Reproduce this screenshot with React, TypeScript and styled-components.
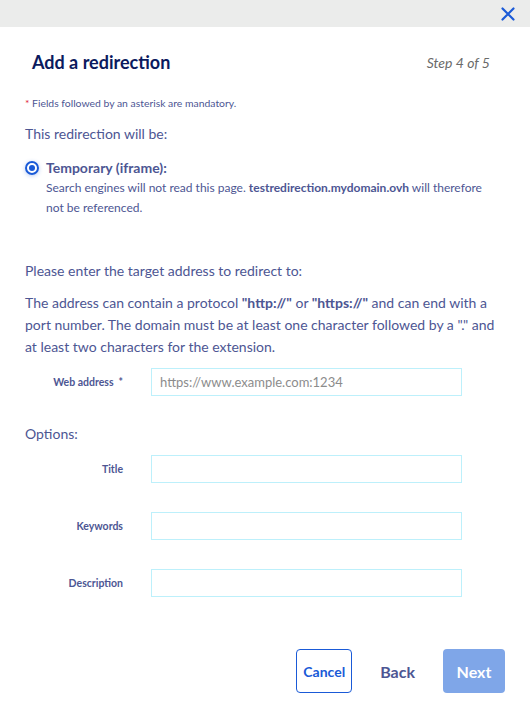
import React from 'react';
import styled, { createGlobalStyle } from 'styled-components';

const GlobalStyle = createGlobalStyle`
  html, body {
    margin: 0;
    padding: 0;
    background: #fff;
  }
  body {
    font-family: 'Lato', 'Open Sans', sans-serif;
    color: #4d5693;
  }
`;

interface FieldProps {
  label: string;
  required?: boolean;
  placeholder?: string;
}

const Field: React.FC<FieldProps> = ({ label, required, placeholder }) => (
  <FieldRow>
    <FieldLabel>
      {label}
      {required && <LabelStar>*</LabelStar>}
    </FieldLabel>
    <TextInput placeholder={placeholder} />
  </FieldRow>
);

const App: React.FC = () => (
  <>
    <GlobalStyle />
    <Modal>
      <TopBar>
        <CloseButton aria-label="close">
          <svg width="14" height="14" viewBox="0 0 14 14">
            <path d="M1.5 1.5 L12.5 12.5 M12.5 1.5 L1.5 12.5" stroke="#1a5ad7" strokeWidth="2.2" strokeLinecap="round" />
          </svg>
        </CloseButton>
      </TopBar>
      <Header>
        <Title>Add a redirection</Title>
        <Step>Step 4 of 5</Step>
      </Header>
      <Body>
        <Mandatory>
          <Red>*</Red> Fields followed by an asterisk are mandatory.
        </Mandatory>
        <Intro>This redirection will be:</Intro>
        <RadioRow>
          <Radio />
          <RadioContent>
            <RadioTitle>Temporary (iframe):</RadioTitle>
            <RadioDesc>
              Search engines will not read this page. <b>testredirection.mydomain.ovh</b> will therefore not be
              referenced.
            </RadioDesc>
          </RadioContent>
        </RadioRow>
        <Section>
          <Text>Please enter the target address to redirect to:</Text>
          <Paragraph>
            The address can contain a protocol <b>"http://"</b> or <b>"https://"</b> and can end with a port number. The
            domain must be at least one character followed by a "." and at least two characters for the extension.
          </Paragraph>
          <Field label="Web address" required placeholder="https://www.example.com:1234" />
        </Section>
        <Options>
          <Text>Options:</Text>
          <Fields>
            <Field label="Title" />
            <Field label="Keywords" />
            <Field label="Description" />
          </Fields>
        </Options>
      </Body>
      <Footer>
        <CancelButton>Cancel</CancelButton>
        <BackButton>Back</BackButton>
        <NextButton disabled>Next</NextButton>
      </Footer>
    </Modal>
  </>
);

export default App;

const Modal = styled.div`
  width: 530px;
  height: 713px;
  background: #fff;
  display: flex;
  flex-direction: column;
`;

const TopBar = styled.div`
  height: 27px;
  background: #ebeceb;
  display: flex;
  justify-content: flex-end;
  align-items: center;
  padding-right: 15px;
`;

const CloseButton = styled.button`
  border: none;
  background: none;
  padding: 0;
  display: flex;
  cursor: pointer;
`;

const Header = styled.div`
  display: flex;
  justify-content: space-between;
  align-items: center;
  padding: 23px 40px 0 32px;
  height: 24px;
`;

const Title = styled.h1`
  margin: 0;
  font-size: 18px;
  font-weight: 700;
  color: #0b1a5e;
`;

const Step = styled.span`
  font-size: 14px;
  font-style: italic;
  color: #6a6a6a;
`;

const Body = styled.div`
  padding: 0 25px;
  display: flex;
  flex-direction: column;
`;

const Mandatory = styled.p`
  margin: 23px 0 0;
  font-size: 10.4px;
`;

const Red = styled.span`
  color: #e1283c;
`;

const Text = styled.p`
  margin: 12px 0 0;
  font-size: 14px;
  line-height: 22px;
`;

const Intro = styled(Text)`
  margin-top: 14px;
`;

const RadioRow = styled.div`
  display: flex;
  gap: 7px;
  margin-top: 13px;
`;

const Radio = styled.span`
  width: 14px;
  height: 14px;
  box-sizing: border-box;
  border-radius: 50%;
  border: 2px solid #1a5ad7;
  margin-top: 3px;
  flex-shrink: 0;
  box-shadow: 0 1px 4px rgba(26, 90, 215, 0.3);
  display: flex;
  align-items: center;
  justify-content: center;

  &::after {
    content: '';
    width: 6px;
    height: 6px;
    border-radius: 50%;
    background: #1a5ad7;
  }
`;

const RadioContent = styled.div`
  display: flex;
  flex-direction: column;
  max-width: 450px;
`;

const RadioTitle = styled.span`
  font-size: 14px;
  font-weight: 700;
  line-height: 20px;
`;

const RadioDesc = styled.p`
  margin: 0;
  font-size: 12px;
  line-height: 20px;
`;

const Section = styled.div`
  margin-top: 30px;
  display: flex;
  flex-direction: column;
`;

const Paragraph = styled.p`
  margin: 10px 0 0;
  font-size: 14px;
  line-height: 22px;
`;

const Options = styled.div`
  margin-top: 15px;
  display: flex;
  flex-direction: column;
`;

const Fields = styled.div`
  display: flex;
  flex-direction: column;
  gap: 19px;
  margin-top: 0;
`;

const FieldRow = styled.div`
  display: grid;
  grid-template-columns: 98px 311px;
  column-gap: 28px;
  align-items: center;
  margin-top: 10px;
`;

const FieldLabel = styled.label`
  text-align: right;
  font-size: 10.5px;
  font-weight: 700;
`;

const LabelStar = styled.span`
  margin-left: 5px;
`;

const TextInput = styled.input`
  height: 28px;
  box-sizing: border-box;
  border: 1px solid #bdf0fb;
  padding: 0 8px;
  font-family: 'Lato', sans-serif;
  font-size: 13px;
  color: #4d5693;
  outline: none;

  &::placeholder {
    color: #8c8c8c;
  }
`;

const Footer = styled.div`
  margin-top: auto;
  display: flex;
  justify-content: flex-end;
  align-items: center;
  gap: 28px;
  padding: 0 25px 20px;
`;

const BaseButton = styled.button`
  height: 44px;
  border-radius: 4px;
  font-family: 'Lato', sans-serif;
  font-size: 14px;
  font-weight: 700;
  padding: 0 5px;
`;

const CancelButton = styled(BaseButton)`
  background: #fff;
  border: 1px solid #1a5ad7;
  color: #1a5ad7;
  width: 56px;
`;

const BackButton = styled(BaseButton)`
  background: none;
  border: none;
  color: #4d5693;
  font-size: 16px;
  padding: 0;
`;

const NextButton = styled(BaseButton)`
  background: #7fa6e8;
  border: none;
  color: #fff;
  width: 62px;
  font-size: 16px;
`;
